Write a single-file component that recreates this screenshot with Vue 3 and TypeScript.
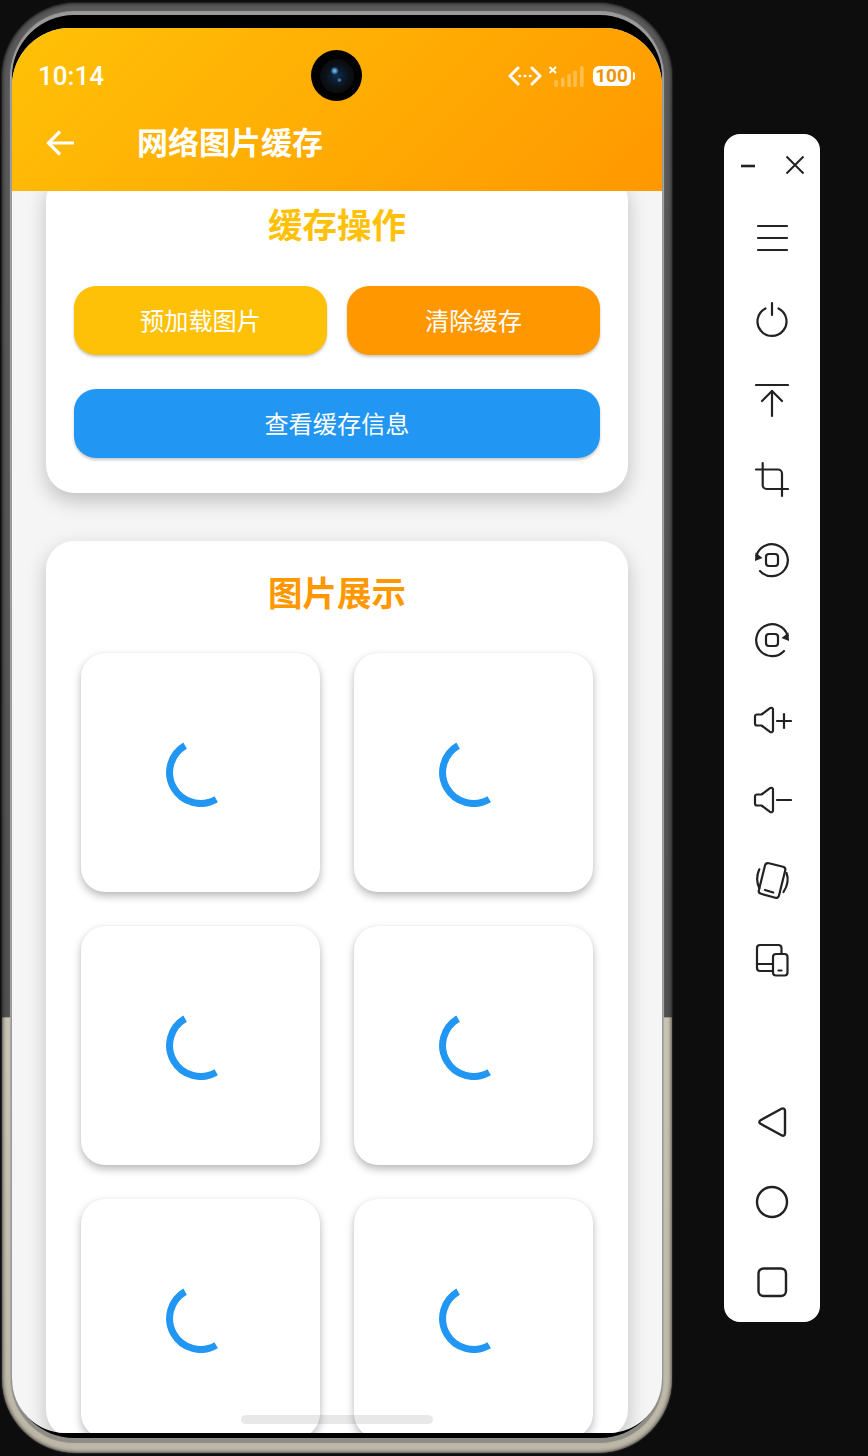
<script setup lang="ts">
interface ToolIcon {
  name: string
  paths: string[]
  filled?: string
}

const tiles: number[] = [1, 2, 3, 4, 5, 6]

const squareDot = 'M17 14h6a3 3 0 0 1 3 3v6a3 3 0 0 1-3 3h-6a3 3 0 0 1-3-3v-6a3 3 0 0 1 3-3Z'
const speaker = 'M5 14.5H9.5L18 8.2C19.5 7.2 21 8 21 9.6V30.4C21 32 19.5 32.8 18 31.8L9.5 25.5H5C3.8 25.5 3 24.7 3 23.5V16.5C3 15.3 3.8 14.5 5 14.5Z'

const topIcons: ToolIcon[] = [
  { name: 'menu', paths: ['M6 6H35', 'M6 18H35', 'M6 30H35'] },
  { name: 'power', paths: ['M13.5 8.5A14.5 14.5 0 1 0 26.5 8.5', 'M20 3V15'] },
  { name: 'top', paths: ['M4 5H36', 'M20 11V36', 'M10 21L20 11L30 21'] },
  { name: 'crop', paths: ['M10.7 3V25a4 4 0 0 0 4 4H36', 'M4 9.5H26a4 4 0 0 1 4 4V36'] },
  { name: 'rotate-left', paths: ['M8 31A16 16 0 1 0 4.5 15.5', squareDot], filled: 'M3 21L3.5 12.5L10.5 18Z' },
  { name: 'rotate-right', paths: ['M32 31A16 16 0 1 1 35.5 15.5', squareDot], filled: 'M37 21L36.5 12.5L29.5 18Z' },
  { name: 'volume-up', paths: [speaker, 'M25 21H39', 'M32 14V28'] },
  { name: 'volume-down', paths: [speaker, 'M25 20H39'] },
  {
    name: 'shake',
    paths: [
      'M17 3.3L31 6.8C32.8 7.3 33.6 8.8 33.2 10.5L27 35.5C26.6 37.3 25 38.2 23.3 37.7L9 33.8C7.3 33.3 6.4 31.8 6.9 30L13 5.5C13.5 3.7 15.2 2.8 17 3.3Z',
      'M13 30L21.3 32.5',
      'M7.3 9.3Q3 19 7.3 28.3',
      'M34.5 13Q38 22 31.5 32',
    ],
  },
  {
    name: 'devices',
    paths: [
      'M29.5 13V8a3 3 0 0 0-3-3H8a3 3 0 0 0-3 3v20a3 3 0 0 0 3 3h12',
      'M5 24H20',
      'M24 14H32.5a3 3 0 0 1 3 3V32.5a3 3 0 0 1-3 3H24a3 3 0 0 1-3-3V17a3 3 0 0 1 3-3Z',
      'M26.5 30.5H29.5',
    ],
  },
]

const navIcons: ToolIcon[] = [
  { name: 'back', paths: ['M8.5 18.2L29.5 6.8C31.5 5.8 33 6.8 33 9V31.2C33 33.4 31.5 34.3 29.5 33.2L8.5 21.8C7 21 7 19 8.5 18.2Z'] },
  { name: 'home', paths: ['M20 5A15 15 0 1 1 20 35A15 15 0 1 1 20 5Z'] },
  { name: 'recent', paths: ['M11.5 6.5H29a5 5 0 0 1 5 5V29a5 5 0 0 1-5 5H11.5a5 5 0 0 1-5-5V11.5a5 5 0 0 1 5-5Z'] },
]

const signalBars = [
  { x: 6.3, h: 7 },
  { x: 13, h: 9.5 },
  { x: 19.3, h: 13 },
  { x: 25.3, h: 16.5 },
  { x: 32, h: 21 },
]
</script>

<template>
  <div class="desk">
    <div class="phone">
      <div class="bezel">
        <div class="screen">
          <header class="head">
            <div class="status">
              <span class="time">10:14</span>
              <div class="status-right">
                <svg class="data-icon" width="34" height="20" viewBox="0 0 34 20" fill="none" stroke="#fff" stroke-width="3" stroke-linecap="round" stroke-linejoin="round">
                  <path d="M10 2L2 10L10 18" />
                  <path d="M24 2L32 10L24 18" />
                  <path d="M11.5 10H12M16.8 10H17.3M22 10H22.5" stroke-width="2.6" />
                </svg>
                <svg class="signal-icon" width="36" height="21" viewBox="0 0 36 21">
                  <path d="M1.5 1L8 7M8 1L1.5 7" stroke="#fff" stroke-width="1.8" fill="none" />
                  <rect v-for="b in signalBars" :key="b.x" :x="b.x" :y="21 - b.h" width="3.6" :height="b.h" rx="1.6" fill="#fff" opacity="0.3" />
                </svg>
                <div class="battery"><span>100</span></div>
                <span class="battery-nub"></span>
              </div>
            </div>
            <div class="appbar">
              <svg width="32" height="32" viewBox="0 0 32 32" fill="none" stroke="#fff" stroke-width="3.2">
                <path d="M29 16H4" />
                <path d="M15 4.5L3.5 16L15 27.5" />
              </svg>
              <h1 class="appbar-title">网络图片缓存</h1>
            </div>
          </header>

          <main class="content">
            <section class="card">
              <h2 class="card-title amber">缓存操作</h2>
              <div class="btn-row">
                <button class="btn btn-amber">预加载图片</button>
                <button class="btn btn-orange">清除缓存</button>
              </div>
              <button class="btn btn-blue">查看缓存信息</button>
            </section>

            <section class="card card-gallery">
              <h2 class="card-title orange">图片展示</h2>
              <div class="gallery">
                <div v-for="t in tiles" :key="t" class="tile">
                  <svg width="69" height="69" viewBox="0 0 69 69" fill="none">
                    <path d="M19.1 7.6A31 31 0 1 0 50.2 61.3" stroke="#2196f3" stroke-width="7" />
                  </svg>
                </div>
              </div>
            </section>
          </main>

          <div class="camera"><span class="lens"></span></div>
          <div class="home-bar"></div>
        </div>
      </div>
    </div>

    <aside class="toolbar">
      <div class="tool-top">
        <svg width="20" height="20" viewBox="0 0 20 20" fill="none" stroke="#222" stroke-width="2.6">
          <path d="M3 11H17" />
        </svg>
        <svg width="20" height="20" viewBox="0 0 20 20" fill="none" stroke="#222" stroke-width="2">
          <path d="M1.5 1.5L18.5 18.5M18.5 1.5L1.5 18.5" />
        </svg>
      </div>
      <div class="tool-list">
        <div v-for="icon in topIcons" :key="icon.name" class="tool">
          <svg width="40" height="40" viewBox="0 0 40 40" fill="none" stroke="#222" stroke-width="2.2" stroke-linecap="round" stroke-linejoin="round">
            <path v-for="p in icon.paths" :key="p" :d="p" />
            <path v-if="icon.filled" :d="icon.filled" fill="#222" stroke="none" />
          </svg>
        </div>
      </div>
      <div class="tool-list tool-nav">
        <div v-for="icon in navIcons" :key="icon.name" class="tool">
          <svg width="40" height="40" viewBox="0 0 40 40" fill="none" stroke="#222" stroke-width="2.4" stroke-linejoin="round">
            <path v-for="p in icon.paths" :key="p" :d="p" />
          </svg>
        </div>
      </div>
    </aside>
  </div>
</template>

<style>
html,
body {
  background: #0d0d0d;
}
</style>

<style scoped>
.desk {
  display: flex;
  align-items: flex-start;
  width: 868px;
  height: 1456px;
  overflow: hidden;
  background: #0d0d0d;
  font-family: "Noto Sans CJK SC", "Noto Sans", sans-serif;
}

/* device frame */
.phone {
  flex: none;
  box-sizing: border-box;
  width: 670px;
  height: 1450px;
  margin: 3px 0 0 2px;
  padding: 12px 10px 15px;
  border-radius: 74px;
  background: linear-gradient(180deg, #5a5a5a 0, #505050 69.9%, #c9c3b3 70%, #bdb7a8 100%);
  box-shadow: inset 0 0 4px #161616, 0 0 2px #555;
}

.bezel {
  height: 100%;
  box-sizing: border-box;
  padding: 13px 0 5px;
  border-radius: 62px;
  background: #000;
  box-shadow: 0 -3px 1px 1px #9a9a9a, 0 4px 1px 1px #8d8b85, 0 0 1px 2px #adadad;
}

.screen {
  position: relative;
  height: 100%;
  overflow: hidden;
  border-radius: 58px 58px 54px 54px;
  background: #f5f5f5;
}

.head {
  position: relative;
  z-index: 2;
  height: 163px;
  background: linear-gradient(135deg, #ffc107, #ff9800);
  color: #fff;
}

.status {
  display: flex;
  align-items: center;
  justify-content: space-between;
  height: 88px;
  padding: 8px 27px 0 26px;
  box-sizing: border-box;
}

.time {
  font-family: Roboto, "Noto Sans", sans-serif;
  font-size: 26px;
  font-weight: 500;
}

.status-right {
  display: flex;
  align-items: center;
}

.signal-icon {
  margin-left: 6px;
}

.battery {
  display: flex;
  align-items: center;
  justify-content: center;
  width: 38px;
  height: 20px;
  margin-left: 9px;
  border-radius: 6px;
  background: #fff;
  color: #ee9400;
  font-family: Roboto, sans-serif;
  font-size: 19px;
  font-weight: 700;
  line-height: 20px;
}

.battery-nub {
  width: 2.5px;
  height: 8px;
  margin-left: 2px;
  border-radius: 0 2px 2px 0;
  background: #fff;
}

.appbar {
  display: flex;
  align-items: center;
  height: 54px;
  padding-left: 33px;
}

.appbar-title {
  margin: 0 0 4px 60px;
  font-size: 31px;
  font-weight: 700;
  line-height: 50px;
}

.content {
  margin-top: -18px;
  padding: 0 34px;
}

.card {
  box-sizing: border-box;
  padding: 28px 28px 35px;
  border-radius: 28px;
  background: #fff;
  box-shadow: 0 8px 20px rgba(0, 0, 0, 0.22);
}

.card-gallery {
  margin-top: 48px;
  padding: 28px 35px 0;
}

.card-title {
  margin: 0 0 41px;
  font-size: 34.5px;
  font-weight: 700;
  line-height: 44px;
  text-align: center;
}

.card-gallery .card-title {
  margin-bottom: 40px;
}

.amber {
  color: #ffc107;
}

.orange {
  color: #ff9800;
}

.btn-row {
  display: flex;
  gap: 20px;
  margin-bottom: 34px;
}

.btn {
  display: block;
  flex: 1;
  height: 69px;
  padding: 0 0 3px;
  border: none;
  border-radius: 22px;
  color: #fff;
  font-family: inherit;
  font-size: 24.2px;
  box-shadow: 0 2px 3px rgba(0, 0, 0, 0.22);
}

.btn-amber {
  background: #ffc107;
}

.btn-orange {
  background: #ff9800;
}

.btn-blue {
  width: 100%;
  background: #2196f3;
}

.gallery {
  display: grid;
  grid-template-columns: 239px 239px;
  grid-auto-rows: 239px;
  gap: 34px;
}

.tile {
  display: flex;
  align-items: center;
  justify-content: center;
  border-radius: 24px;
  background: #fff;
  box-shadow: 0 4px 9px rgba(0, 0, 0, 0.28), 0 0 2px rgba(0, 0, 0, 0.06);
}

/* lies over the status bar */
.camera {
  position: absolute;
  z-index: 3;
  top: 22px;
  left: 299px;
  display: flex;
  align-items: center;
  justify-content: center;
  width: 51px;
  height: 51px;
  border-radius: 50%;
  background: #000;
}

.lens {
  width: 34px;
  height: 34px;
  border-radius: 50%;
  background:
    radial-gradient(circle at 43% 35%, #8cc4ee 0, #4b8fc4 6%, transparent 14%),
    radial-gradient(circle at 57% 62%, #5f96be 0, transparent 9%),
    radial-gradient(circle at 50% 50%, #102a47 0, #0a1a2d 32%, #0c0f14 52%, #070708 100%);
}

.home-bar {
  position: absolute;
  z-index: 3;
  left: 229px;
  bottom: 9px;
  width: 192px;
  height: 9px;
  border-radius: 5px;
  background: rgba(0, 0, 0, 0.09);
}

/* emulator side panel */
.toolbar {
  flex: none;
  display: flex;
  flex-direction: column;
  box-sizing: border-box;
  width: 96px;
  height: 1188px;
  margin: 134px 0 0 52px;
  border-radius: 16px;
  background: #fff;
}

.tool-top {
  display: flex;
  gap: 27px;
  height: 40px;
  margin-top: 11px;
  padding: 10px 0 0 14px;
  box-sizing: border-box;
}

.tool-list {
  margin-top: 15px;
}

.tool-nav {
  margin-top: auto;
}

.tool {
  display: flex;
  align-items: center;
  justify-content: center;
  height: 80px;
}
</style>
